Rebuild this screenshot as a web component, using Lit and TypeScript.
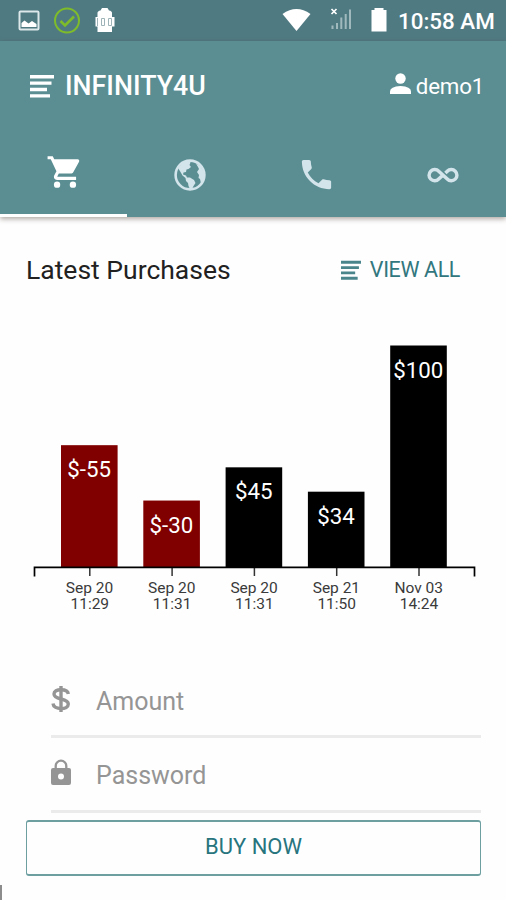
import { LitElement, html, css, svg } from "lit";
import { customElement, state } from "lit/decorators.js";

const purchases = [
  { amount: -55, day: "Sep 20", time: "11:29" },
  { amount: -30, day: "Sep 20", time: "11:31" },
  { amount: 45, day: "Sep 20", time: "11:31" },
  { amount: 34, day: "Sep 21", time: "11:50" },
  { amount: 100, day: "Nov 03", time: "14:24" },
];

const listIcon = svg`<path d="M0 0h24v3.400H0zM0 6.400h21.500v3.400H0zM0 12.800h17v3.400H0zM0 19.200h20v3.400H0z"/>`;

@customElement("purchase-chart")
export class PurchaseChart extends LitElement {
  static styles = css`
    :host { display: block; }
    svg { display: block; width: 506px; height: 290px; font-family: Roboto, sans-serif; }
    .bar { fill: #000; }
    .debit { fill: #800000; }
    .value { fill: #fff; font-size: 22.3px; text-anchor: middle; }
    .axis { fill: none; stroke: #000; stroke-width: 1.7; }
    .tick { fill: none; stroke: #333; stroke-width: 1.5; }
    .label { fill: #3a3a3a; font-size: 15.5px; text-anchor: middle; }
  `;
  render() {
    const base = 237;
    return html`<svg viewBox="0 0 506 290">
      ${purchases.map((p, i) => {
        const h = Math.abs(p.amount) * 2.215;
        const cx = 89.3 + i * 82.3;
        return svg`
          <rect class="bar ${p.amount < 0 ? "debit" : ""}" x=${cx - 28.3} y=${base - h} width="56.6" height=${h}></rect>
          <text class="value" x=${cx - 0.2} y=${base - h + 32}>$${p.amount}</text>
          <path class="tick" d="M${cx + 0.5} ${base}v9"></path>
          <text class="label" x=${cx + 0.2} y="262.500">${p.day}</text>
          <text class="label" x=${cx + 0.5} y="279.200">${p.time}</text>`;
      })}
      <path class="axis" d="M34.500 246.500v-9.200h440v9.200"></path>
    </svg>`;
  }
}

@customElement("app-root")
export class AppRoot extends LitElement {
  @state() private tab = 0;

  static styles = css`
    :host { display: block; width: 506px; height: 900px; overflow: hidden; background: #fefefe; font-family: Roboto, sans-serif; }
    * { box-sizing: border-box; }
    svg { display: block; flex: none; }
    .status { height: 41px; background: #507a82; display: flex; align-items: center; padding: 0 12px 0 18px; color: #fff; }
    .clock { font-size: 22.4px; font-weight: 500; line-height: 41px; padding-top: 2px; white-space: nowrap; }
    .top { height: 176px; background: #5a8e93; display: flex; flex-direction: column; box-shadow: 0 2px 5px rgba(60, 40, 30, 0.4); color: #fff; }
    .bar { height: 88px; display: flex; align-items: center; padding: 2px 22px 0 30px; }
    .title { font-size: 26.8px; font-weight: 500; margin-left: 11px; white-space: nowrap; }
    .user { margin-left: auto; display: flex; align-items: center; gap: 5px; font-size: 22.3px; letter-spacing: -0.2px; white-space: nowrap; }
    .person { margin-top: -4px; }
    .tabs { height: 88px; display: grid; grid-template-columns: repeat(4, 1fr); fill: #d3e4ea; }
    .tab { display: flex; align-items: center; justify-content: center; padding: 6px 0 0 1px; border-bottom: 3px solid transparent; }
    .tab.on { fill: #fff; border-color: #fff; padding: 1px 0 0 4px; }
    .heading { height: 113px; display: flex; align-items: center; padding: 0 46px 8px 26px; }
    .h { font-size: 26.5px; color: #212121; white-space: nowrap; }
    .all { margin-left: auto; display: flex; align-items: center; gap: 9px; color: #32777e; fill: #4a858b; font-size: 21.5px; letter-spacing: -0.4px; white-space: nowrap; }
    .form { padding: 46px 25px 0 51px; }
    .field { height: 72px; border-bottom: 3px solid #ebebeb; display: flex; align-items: center; gap: 25px; color: #959595; fill: #959595; font-size: 25px; padding-top: 2px; }
    .field + .field { height: 75px; }
    .money { margin-top: -6px; }
    .lock { margin-top: -5px; }
    .buy { margin: 7px 25px 0 26px; height: 56px; border: 1.5px solid #6d9fa1; border-top-width: 2px; border-bottom-width: 2px; border-radius: 3px; display: flex; align-items: center; justify-content: center; color: #28757e; font-size: 22px; padding-bottom: 3px; }
    .edge { width: 2px; height: 15px; background: #8c8c8c; margin-top: 9px; }
  `;

  private icons = [
    svg`<svg width="38" height="38" viewBox="0 0 24 24"><circle cx="7" cy="20" r="2"/><circle cx="17" cy="20" r="2"/><path d="M1 2h3.270l.94 2H20c.76 0 1.240.8.88 1.480L17.300 12c-.34.6-1 1-1.750 1H8.100l-.9 1.630c-.1.180 0 .37.220.37H19v2H7c-1.520 0-2.480-1.630-1.750-2.960l1.350-2.450L3 4H1z"/></svg>`,
    svg`<svg width="32" height="32" viewBox="0 0 32 32"><circle cx="16" cy="16" r="14.400" fill="none" stroke="#d3e4ea" stroke-width="2.600"/><path d="M4 9L10 3l5-1.500 1.500 2-1 2.500 1.500 2-2.500 2-2 .5-.5 2.500-2.500.5-.5 2 3 1 1 2 3 0 4 2.500 1.500 3-2 3-1.500 3h-2l-1.500-3-.5-3-2-2-.5-3-3-2.500-2-3.500zM22 4.500l5 3 3.500 7-.5 7-3 3-1-4.500-1.500-1 .5-3-2-3 2-3-1-2z"/></svg>`,
    svg`<svg width="39" height="39" viewBox="0 0 24 24"><path d="M6.620 10.790c1.440 2.830 3.760 5.140 6.590 6.590l2.200-2.200c.27-.27.67-.36 1.020-.24 1.120.37 2.330.57 3.570.57.55 0 1 .45 1 1V20c0 .55-.45 1-1 1-9.390 0-17-7.610-17-17 0-.55.45-1 1-1h3.500c.55 0 1 .45 1 1 0 1.250.2 2.450.57 3.570.11.35.03.74-.25 1.020l-2.200 2.200z"/></svg>`,
    svg`<svg width="32" height="32" viewBox="0 0 24 24"><path fill="none" stroke="#d3e4ea" stroke-width="2.600" d="M13.800 10.500l1.400-1.300a4.200 4.200 0 1 1 0 5.800L8.800 9.200a4.200 4.200 0 1 0 0 5.800l3.200-3"/></svg>`,
  ];

  render() {
    return html`
      <div class="status">
        <svg width="300" height="41" viewBox="18 0 300 41">
          <rect x="19.500" y="11.500" width="19" height="18" rx="1" fill="none" stroke="#dce8ea" stroke-width="2"/>
          <path d="M21.500 27v-4l3-2.500 4 3 3.500-2.500 4.500 3v3z" fill="#fff"/>
          <circle cx="67" cy="20.500" r="12" fill="none" stroke="#7fbc2a" stroke-width="2"/>
          <path d="M60.500 21l4.500 4.500 9-9" fill="none" stroke="#7fbc2a" stroke-width="2.500"/>
          <path d="M97.500 17v-4q0-2 3-2.500L102 8h5.500l1.500 2.500q3 .5 3 2.500v4h2.500v9.500H112V32H97.500v-5.500h-2V17z" fill="#fff"/>
          <path d="M97.500 18v8M101.500 18.500h3v7h-3zM108.500 18.500h3v7h-3z" fill="none" stroke="#9db3b7"/>
          <path d="M282.500 14q14-10 28 0L296.500 31z" fill="#fff"/>
        </svg>
        <svg width="80" height="41" viewBox="318 0 80 41">
          <path d="M331.500 9l5 5m0-5l-5 5" stroke="#fff" stroke-width="1.700"/>
          <path d="M332.500 29v-3.500M337 29v-6M341.300 29V17.500M345.700 29v-15M350 29V9.500" stroke="#9fb9bd" stroke-width="2"/>
          <path d="M371.500 10h3V8h9v2h3v21.500h-15z" fill="#fff"/>
        </svg>
        <span class="clock">10:58 AM</span>
      </div>
      <div class="top">
        <div class="bar">
          <svg width="24" height="24" viewBox="0 -1 24 24" fill="#fff">${listIcon}</svg>
          <span class="title">INFINITY4U</span>
          <span class="user">
            <svg class="person" width="21" height="22" viewBox="0 0 21 22" fill="#fff"><circle cx="10.500" cy="5.500" r="5.200"/><path d="M0 21v-2.500q0-5 10.500-5.500Q21 13.500 21 18.500V21z"/></svg>
            <span>demo1</span>
          </span>
        </div>
        <div class="tabs">
          ${this.icons.map((icon, i) => html`<div class="tab ${i === this.tab ? "on" : ""}" @click=${() => (this.tab = i)}>${icon}</div>`)}
        </div>
      </div>
      <div class="heading">
        <span class="h">Latest Purchases</span>
        <span class="all"><svg width="20" height="20" viewBox="0 -1 24 24">${listIcon}</svg><span>VIEW ALL</span></span>
      </div>
      <purchase-chart></purchase-chart>
      <div class="form">
        <div class="field">
          <svg class="money" width="20" height="28" viewBox="0 0 20 28" fill="none" stroke="#959595"><path stroke-width="3.400" d="M17.300 9C17 6 14 4.700 10 4.700S3 6.300 3 9c0 3 3 4 7 5s7.300 2 7.300 5-3.300 4.600-7.300 4.600S2.300 22 2 18.500"/><path stroke-width="3.400" d="M10 1v26"/></svg>
          <span>Amount</span>
        </div>
        <div class="field">
          <svg class="lock" width="20" height="27" viewBox="0 0 20 27"><path fill-rule="evenodd" d="M2 9h16q2 0 2 2v13q0 2-2 2H2q-2 0-2-2V11q0-2 2-2zm8 5.500a3 3 0 1 0 0 6 3 3 0 0 0 0-6z"/><path d="M4.700 10V7a5.300 5.300 0 0 1 10.600 0v3" fill="none" stroke="#959595" stroke-width="2.300"/></svg>
          <span>Password</span>
        </div>
      </div>
      <div class="buy">BUY NOW</div>
      <div class="edge"></div>
    `;
  }
}
